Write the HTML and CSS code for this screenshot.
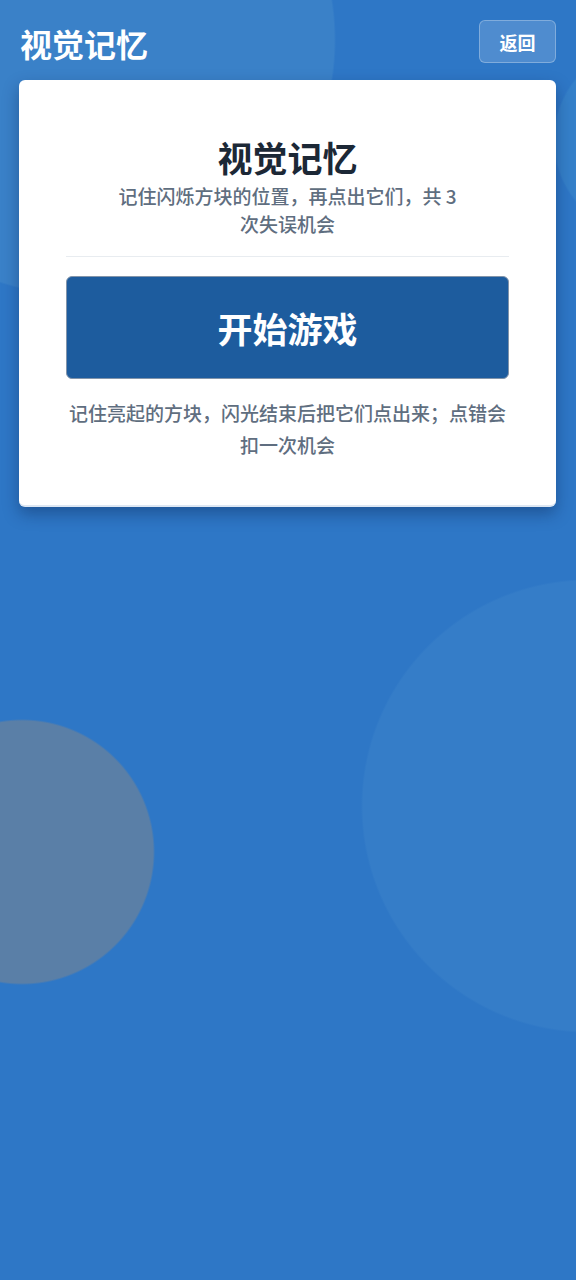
FILE: index.html
```html
<!DOCTYPE html>
<html lang="zh-CN">
<head>
<meta charset="utf-8">
<meta name="viewport" content="width=device-width, initial-scale=1">
<title>视觉记忆</title>
<link rel="stylesheet" href="styles.css">
</head>
<body>
<div class="page">
  <header class="topbar">
    <h1 class="topbar-title">视觉记忆</h1>
    <button class="back-btn" type="button">返回</button>
  </header>
  <main class="card">
    <section class="card-head">
      <h2 class="card-title">视觉记忆</h2>
      <p class="card-sub">记住闪烁方块的位置，再点出它们，共 3 次失误机会</p>
    </section>
    <button class="start-btn" type="button">开始游戏</button>
    <p class="hint">记住亮起的方块，闪光结束后把它们点出来；点错会扣一次机会</p>
  </main>
</div>
</body>
</html>
```
FILE: styles.css
```css
* { box-sizing: border-box; }
html, body { margin: 0; padding: 0; }
body {
  width: 576px;
  min-height: 1280px;
  font-family: "Noto Sans CJK SC", "Noto Sans", sans-serif;
  background-color: #2e77c6;
  background-image:
    radial-gradient(circle at 80px 40px, #3a81c8 254px, rgba(58,129,200,0) 256px),
    radial-gradient(circle at 650px 140px, #3580c9 95px, rgba(53,128,201,0) 97px),
    radial-gradient(circle at 22px 852px, #5a7fa7 131px, rgba(90,127,167,0) 133px),
    radial-gradient(circle at 588px 806px, #357dc8 225px, rgba(53,125,200,0) 227px);
  background-repeat: no-repeat;
}
.page {
  display: flex;
  flex-direction: column;
  padding: 20px 20px 0 19px;
}
.topbar {
  display: flex;
  justify-content: space-between;
  align-items: center;
  padding-left: 1px;
}
.topbar-title {
  margin: 3px 0 0 0;
  font-size: 32px;
  line-height: 40px;
  font-weight: 700;
  color: #ffffff;
}
.back-btn {
  width: 77px;
  height: 43px;
  border: 1px solid rgba(255,255,255,0.28);
  border-radius: 6px;
  background: rgba(255,255,255,0.16);
  color: #ffffff;
  font-family: inherit;
  font-size: 18px;
  font-weight: 700;
  padding: 0;
}
.card {
  margin-top: 17px;
  width: 537px;
  background: #ffffff;
  border-radius: 6px;
  border-bottom: 2px solid #dde7f3;
  box-shadow: 0 7px 16px rgba(10, 35, 80, 0.4);
  padding: 56px 47px 44px 47px;
  display: flex;
  flex-direction: column;
  align-items: stretch;
}
.card-head {
  display: flex;
  flex-direction: column;
  align-items: center;
  padding-bottom: 18px;
  border-bottom: 1px solid #e8ecf0;
}
.card-title {
  margin: 0;
  font-size: 35px;
  line-height: 42px;
  font-weight: 700;
  color: #1c2836;
}
.card-sub {
  margin: 4px 0 0 0;
  max-width: 352px;
  text-align: center;
  font-size: 19px;
  line-height: 28px;
  font-weight: 500;
  color: #5f6e80;
}
.start-btn {
  margin-top: 19px;
  height: 103px;
  border: 1px solid #8294aa;
  border-radius: 6px;
  background: #1d5c9e;
  color: #ffffff;
  font-family: inherit;
  font-size: 35px;
  font-weight: 700;
  padding: 0;
}
.hint {
  margin: 18px 0 0 0;
  text-align: center;
  font-size: 19px;
  line-height: 32px;
  font-weight: 500;
  color: #5f6e80;
}
```
